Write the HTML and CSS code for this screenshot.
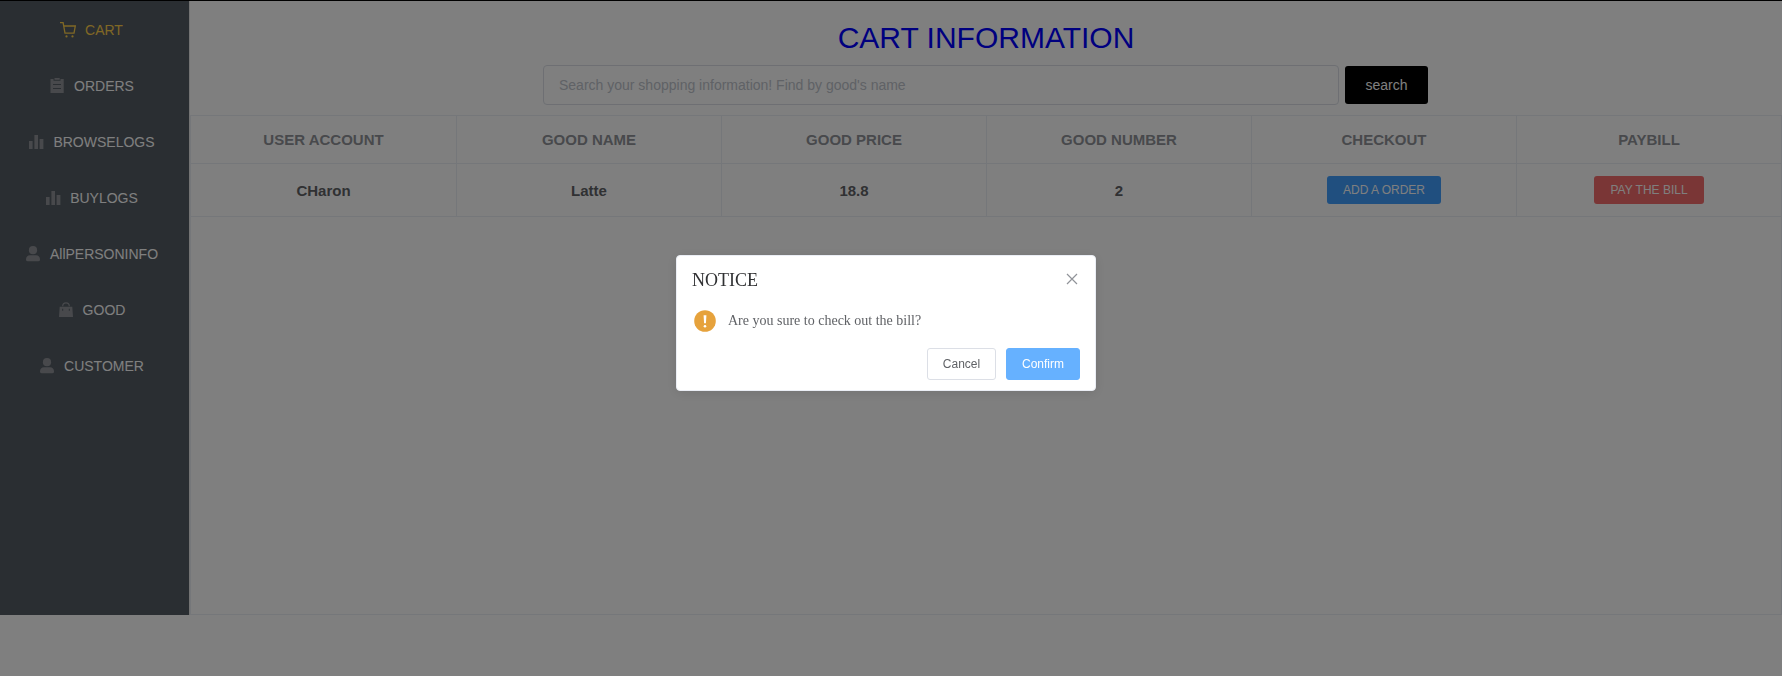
FILE: index.html
```
<!DOCTYPE html>
<html lang="en">
<head>
<meta charset="utf-8">
<title>Cart information</title>
<link rel="stylesheet" href="styles.css">
</head>
<body>
<svg class="sprite" aria-hidden="true">
  <symbol id="bars" viewBox="0 0 18 18"><path d="M2 8H5.600v8H2zM7.400 2h3.600V16H7.400zM12.600 6h3.800v10H12.600z"/></symbol>
  <symbol id="person" viewBox="0 0 18 18"><circle cx="9" cy="5.200" r="4.100"/><path d="M2 14.500c0-2.600 1.500-4.200 4-4.200h6c2.500 0 4 1.600 4 4.200 0 1.200-.5 1.700-1.500 1.700h-11c-1 0-1.500-.5-1.500-1.700z"/></symbol>
</svg>
<div class="page">
  <nav class="menu">
    <div class="item active"><svg class="icon" viewBox="0 0 18 18"><path d="M1 1.700h3.100L6 12.200h9L16.300 5H4.700" fill="none" stroke="currentColor" stroke-width="1.300"/><circle cx="7.500" cy="15.400" r="1.100"/><circle cx="13.500" cy="15.400" r="1.100"/></svg><span>CART</span></div>
    <div class="item"><svg class="icon" viewBox="0 0 18 18"><path fill-rule="evenodd" d="M2.500 2H5.500V3.800h7V2h3.200V16H2.500zM5 7v1h8V7zM5 11v1h8v-1z"/><path d="M6.500 1h5.200V2.800H6.500z"/></svg><span>ORDERS</span></div>
    <div class="item"><svg class="icon"><use href="#bars"/></svg><span>BROWSELOGS</span></div>
    <div class="item"><svg class="icon"><use href="#bars"/></svg><span>BUYLOGS</span></div>
    <div class="item"><svg class="icon"><use href="#person"/></svg><span>AllPERSONINFO</span></div>
    <div class="item"><svg class="icon" viewBox="0 0 18 18"><path d="M5.700 5.200a3.300 3.300 0 0 1 6.600 0" fill="none" stroke="currentColor" stroke-width="1.200"/><path fill-rule="evenodd" d="M2.700 5.700h12.600l.7 10.300H2zM5.200 7.700v2h1v-2zM11.800 7.700v2h1v-2z"/></svg><span>GOOD</span></div>
    <div class="item"><svg class="icon"><use href="#person"/></svg><span>CUSTOMER</span></div>
  </nav>
  <main class="content">
    <h1 class="title">CART INFORMATION</h1>
    <div class="search">
      <input class="field" type="text" placeholder="Search your shopping information! Find by good's name">
      <button class="btn search-btn">search</button>
    </div>
    <div class="table">
      <div class="row head">
        <div class="cell">USER ACCOUNT</div><div class="cell">GOOD NAME</div><div class="cell">GOOD PRICE</div><div class="cell">GOOD NUMBER</div><div class="cell">CHECKOUT</div><div class="cell">PAYBILL</div>
      </div>
      <div class="row data">
        <div class="cell">CHaron</div><div class="cell">Latte</div><div class="cell">18.8</div><div class="cell">2</div>
        <div class="cell"><button class="btn mini primary">ADD A ORDER</button></div>
        <div class="cell"><button class="btn mini danger">PAY THE BILL</button></div>
      </div>
    </div>
  </main>
</div>
<div class="overlay">
  <div class="dialog" role="dialog">
    <div class="dialog-head">
      <span class="dialog-title">NOTICE</span>
      <svg class="close" viewBox="0 0 16 16"><path d="M3 3l10 10M13 3L3 13"/></svg>
    </div>
    <div class="dialog-body">
      <svg class="warning" viewBox="0 0 22 22"><circle cx="11" cy="11" r="10.800"/><path class="mark" d="M9.600 5.200h2.800l-.5 8h-1.800z"/><circle class="mark" cx="11" cy="16.200" r="1.300"/></svg>
      <span>Are you sure to check out the bill?</span>
    </div>
    <div class="dialog-foot">
      <button class="btn small">Cancel</button>
      <button class="btn small confirm">Confirm</button>
    </div>
  </div>
</div>
</body>
</html>
```
FILE: styles.css
```
* { box-sizing: border-box; }
html { overflow: hidden; }
body { margin: 0; background: #fff; font-family: "Liberation Serif", "Times New Roman", serif; }
.sprite { display: none; }
.page { display: flex; height: 615px; padding-top: 1px; font-family: "Liberation Sans", Arial, sans-serif; }
.menu { width: 190px; flex: none; padding-top: 1px; background: #545c64; border-right: 1px solid #e6e6e6; }
.item { display: flex; align-items: center; justify-content: center; height: 56px; padding-right: 10px; color: #fff; font-size: 14px; line-height: 56px; }
.item.active { color: #ffd04b; }
.icon { width: 18px; height: 18px; margin: 0 8px 0 3px; color: #909399; fill: currentColor; }
.active .icon { color: #ffd04b; }
.content { display: flex; flex-direction: column; flex: 1; min-width: 0; }
.title { margin: 0; padding-top: 19px; height: 64px; font-size: 30px; font-weight: 400; line-height: 35px; text-align: center; color: #00f; }
.search { display: flex; align-items: center; justify-content: center; gap: 6px; height: 40px; margin-bottom: 10px; padding-right: 1px; }
.field { width: 796px; height: 40px; padding: 0 15px; border: 1px solid #dcdfe6; border-radius: 4px; background: #fff; font: 14px "Liberation Sans", Arial, sans-serif; }
.field::placeholder { color: #c0c4cc; opacity: 1; }
.btn { margin: 0; border: 0; border-radius: 3px; font-family: "Liberation Sans", Arial, sans-serif; color: #fff; white-space: nowrap; line-height: 1; }
.search-btn { width: 83px; height: 38px; padding: 0; background: #000; font-size: 14px; }
.table { flex: 1; border: 1px solid #ebeef5; }
.row { display: grid; grid-template-columns: 266px repeat(5, 265px); border-bottom: 1px solid #ebeef5; font-size: 15px; font-weight: 700; }
.cell { display: flex; align-items: center; justify-content: center; border-right: 1px solid #ebeef5; }
.cell:last-child { border-right: 0; padding-right: 1px; }
.head { height: 48px; color: #909399; }
.data { height: 53px; color: #606266; }
.mini { height: 28px; padding: 0; font-size: 12px; }
.primary { width: 114px; background: #409eff; }
.danger { width: 110px; background: #f56c6c; }
.overlay { position: fixed; inset: 0; border-top: 1px solid #000; background: rgba(0, 0, 0, .5); display: flex; align-items: flex-start; justify-content: center; padding: 254px 10px 0 0; }
.dialog { width: 420px; height: 136px; border: 1px solid #ebeef5; border-radius: 4px; background: #fff; box-shadow: 0 2px 12px 0 rgba(0, 0, 0, .1); }
.dialog-head { display: flex; align-items: center; justify-content: space-between; height: 44px; padding: 4px 15px 0 15px; }
.dialog-title { font-size: 18px; line-height: 18px; color: #303133; }
.close { width: 16px; height: 16px; margin-bottom: 3px; stroke: #909399; stroke-width: 1.2; fill: none; }
.dialog-body { display: flex; align-items: center; gap: 12px; height: 42px; padding-left: 17px; font-size: 14px; color: #606266; }
.warning { width: 22px; height: 22px; fill: #e6a23c; }
.mark { fill: #fff; }
.dialog-foot { display: flex; justify-content: flex-end; gap: 10px; padding: 6px 15px 0; }
.small { width: 69px; height: 32px; padding: 0; border: 1px solid #dcdfe6; background: #fff; color: #606266; font-size: 12px; }
.confirm { width: 74px; border-color: #66b1ff; background: #66b1ff; color: #fff; }
```
